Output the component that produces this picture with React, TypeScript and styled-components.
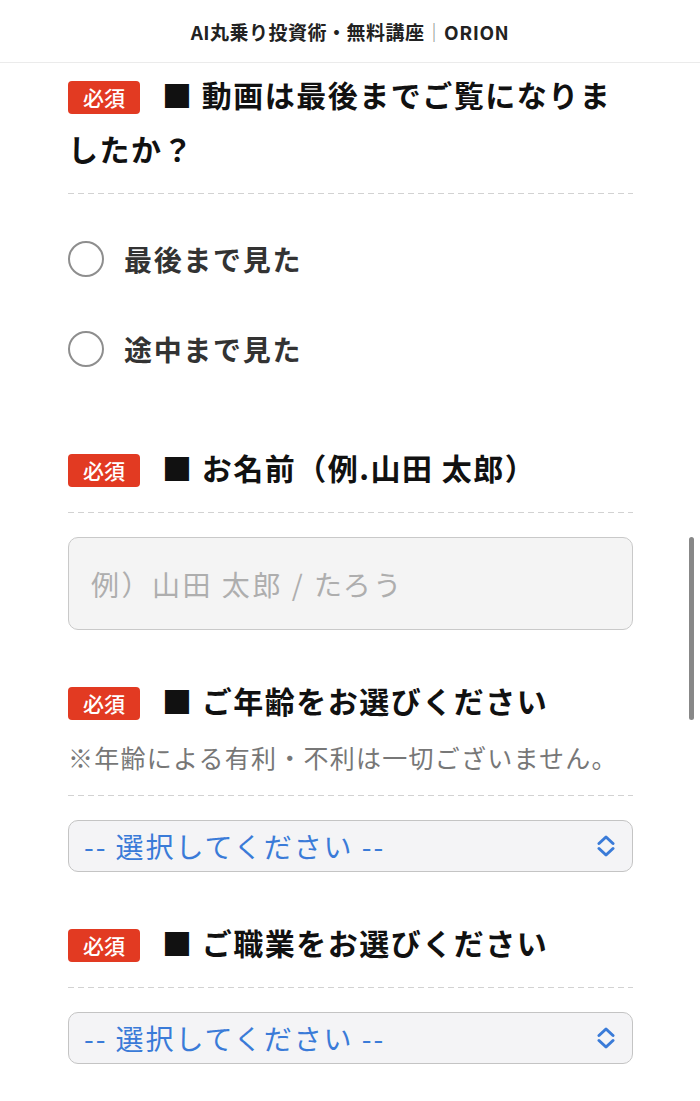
import React from "react";
import styled, { createGlobalStyle } from "styled-components";

const GlobalStyle = createGlobalStyle`
  html, body {
    margin: 0;
    padding: 0;
    background: #fff;
    overflow: hidden;
  }
  body {
    font-family: "Noto Sans CJK JP", "Noto Sans", sans-serif;
    color: #111;
  }
`;

const Page = styled.div`
  width: 100%;
`;

const TopBar = styled.header`
  height: 62px;
  border-bottom: 1px solid #ebebeb;
  display: flex;
  align-items: center;
  justify-content: center;
  font-size: 19px;
  font-weight: 700;
  letter-spacing: 0.5px;
  color: #222;
`;

const Divider = styled.span`
  color: #8a8a8a;
  font-weight: 400;
`;

const Main = styled.main`
  padding: 4px 67px 0 68px;
`;

const Section = styled.section<{ $gap: number }>`
  padding-bottom: ${(p) => p.$gap}px;
`;

const QuestionHead = styled.div`
  padding-bottom: 19px;
  background: linear-gradient(to right, #d2d2d2 0 6px, transparent 6px 10px)
    left bottom / 10px 1px repeat-x;
`;

const Title = styled.h2`
  margin: 0;
  font-size: 30px;
  line-height: 54px;
  font-weight: 700;
  letter-spacing: 0.05em;
  color: #111;
`;

const Badge = styled.span`
  display: inline-block;
  height: 33px;
  line-height: 33px;
  padding: 0 15px;
  margin-right: 22px;
  border-radius: 4px;
  background: #e23a22;
  color: #fff;
  font-size: 21px;
  font-weight: 500;
  letter-spacing: 0;
  vertical-align: 1px;
`;

const Note = styled.p`
  margin: 10px 0 0;
  font-size: 25px;
  line-height: 40px;
  font-weight: 400;
  letter-spacing: 0.05em;
  color: #777;
`;

const RadioList = styled.div`
  display: flex;
  flex-direction: column;
  gap: 34px;
  padding: 37px 0 20px;
`;

const RadioOption = styled.label`
  display: flex;
  align-items: center;
  gap: 20px;
  height: 56px;
  font-size: 28px;
  font-weight: 700;
  letter-spacing: 0.06em;
  color: #333;
`;

const RadioCircle = styled.input`
  appearance: none;
  margin: 0;
  width: 36px;
  height: 36px;
  box-sizing: border-box;
  border: 2.5px solid #8e8e8e;
  border-radius: 50%;
  background: #fff;
`;

const TextInput = styled.input`
  display: block;
  width: 100%;
  height: 93px;
  margin-top: 24px;
  box-sizing: border-box;
  padding: 0 22px;
  border: 1px solid #c9c9c9;
  border-radius: 10px;
  background: #f4f4f4;
  font-family: inherit;
  font-size: 28px;
  letter-spacing: 0.09em;
  color: #333;
  &::placeholder {
    color: #aeaeae;
  }
`;

const SelectWrap = styled.div`
  position: relative;
  margin-top: 24px;
`;

const Select = styled.select`
  appearance: none;
  display: block;
  width: 100%;
  height: 52px;
  box-sizing: border-box;
  padding: 0 50px 0 15px;
  border: 1px solid #c4c4c4;
  border-radius: 10px;
  background: #f4f4f6;
  font-family: inherit;
  font-size: 28px;
  letter-spacing: 0.07em;
  color: #3a7bd8;
`;

const Chevron = styled.svg`
  position: absolute;
  right: 17px;
  top: 50%;
  transform: translateY(-50%);
  pointer-events: none;
`;

const ScrollThumb = styled.div`
  position: fixed;
  right: 6px;
  top: 537px;
  width: 5px;
  height: 183px;
  border-radius: 3px;
  background: #888;
`;

const Head = ({ title, note }: { title: string; note?: string }) => (
  <QuestionHead>
    <Title>
      <Badge>必須</Badge>■ {title}
    </Title>
    {note && <Note>{note}</Note>}
  </QuestionHead>
);

const ChoiceSelect = () => (
  <SelectWrap>
    <Select defaultValue="">
      <option value="">-- 選択してください --</option>
    </Select>
    <Chevron width="20" height="22" viewBox="0 0 20 22" fill="none">
      <path
        d="M3 8.5 L10 2 L17 8.5 M3 13.5 L10 20 L17 13.5"
        stroke="#3a7bd8"
        strokeWidth="3"
        strokeLinecap="round"
        strokeLinejoin="round"
      />
    </Chevron>
  </SelectWrap>
);

const App = () => {
  return (
    <Page>
      <GlobalStyle />
      <TopBar>
        AI丸乗り投資術・無料講座<Divider>｜</Divider>ORION
      </TopBar>
      <Main>
        <Section $gap={43}>
          <Head title="動画は最後までご覧になりましたか？" />
          <RadioList>
            <RadioOption>
              <RadioCircle type="radio" name="watched" />
              最後まで見た
            </RadioOption>
            <RadioOption>
              <RadioCircle type="radio" name="watched" />
              途中まで見た
            </RadioOption>
          </RadioList>
        </Section>
        <Section $gap={43}>
          <Head title="お名前（例.山田 太郎）" />
          <TextInput type="text" placeholder="例）山田 太郎 / たろう" />
        </Section>
        <Section $gap={43}>
          <Head
            title="ご年齢をお選びください"
            note="※年齢による有利・不利は一切ございません。"
          />
          <ChoiceSelect />
        </Section>
        <Section $gap={0}>
          <Head title="ご職業をお選びください" />
          <ChoiceSelect />
        </Section>
      </Main>
      <ScrollThumb />
    </Page>
  );
};

export default App;
